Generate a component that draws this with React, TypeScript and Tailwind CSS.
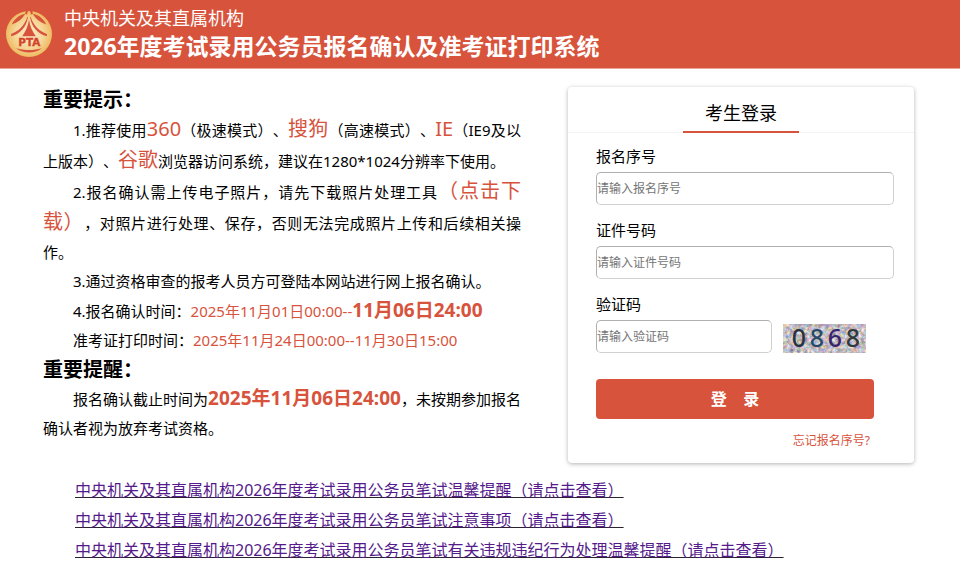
import React from "react";

const notices = [
  "中央机关及其直属机构2026年度考试录用公务员笔试温馨提醒（请点击查看）",
  "中央机关及其直属机构2026年度考试录用公务员笔试注意事项（请点击查看）",
  "中央机关及其直属机构2026年度考试录用公务员笔试有关违规违纪行为处理温馨提醒（请点击查看）",
];

const inputClass =
  "h-[33px] rounded-[5px] border border-[#d0d0d0] border-t-[#b0b0b0] border-l-[#b0b0b0] bg-white text-xs text-black placeholder:text-[#757575]";

function Logo() {
  return (
    <svg viewBox="0 0 136 136" className="mt-1 size-[46px] shrink-0" aria-hidden="true">
      <defs>
        <radialGradient id="gold" cx="50%" cy="50%" r="50%">
          <stop offset="0" stopColor="#fbeccb" />
          <stop offset="0.6" stopColor="#f6d79b" />
          <stop offset="1" stopColor="#eebb61" />
        </radialGradient>
      </defs>
      <circle cx="68" cy="68" r="68" fill="url(#gold)" />
      <g fill="#d7533c">
        <path d="M56 8 C38 12 24 24 17 40 C34 34 48 24 57 8 Z" />
        <path d="M80 8 C98 12 112 24 119 40 C102 34 88 24 79 8 Z" />
        <path d="M58 0 L65 0 L62 10 L57 9 Z" />
        <path d="M78 0 L71 0 L74 10 L79 9 Z" />
        <path d="M63 18 C54 44 38 60 15 68 L15 75 C42 68 60 48 65 18 Z" />
        <path d="M73 18 C82 44 98 60 121 68 L121 75 C94 68 76 48 71 18 Z" />
        <path d="M68 26 C65 46 58 60 48 75 L88 75 C78 60 71 46 68 26 Z" />
        <path d="M30 110 C54 117 82 117 106 110 C84 127 52 127 30 110 Z" />
      </g>
      <text
        x="69"
        y="102"
        textAnchor="middle"
        fill="#d3432c"
        stroke="#d3432c"
        strokeWidth="1"
        className="font-['DejaVu_Sans',sans-serif] text-[31px] font-bold"
      >
        PTA
      </text>
    </svg>
  );
}

function Captcha() {
  return (
    <svg viewBox="0 0 83 29" className="h-[29px] w-[83px] overflow-visible" role="img" aria-label="0868">
      <defs>
        <filter id="noise" x="0" y="0" width="100%" height="100%" colorInterpolationFilters="sRGB">
          <feTurbulence type="fractalNoise" baseFrequency="0.28" numOctaves="3" seed="8" />
          <feColorMatrix values="0.7 0.2 0 0 0.32  0.2 0.6 0 0 0.34  0 0.3 0.6 0 0.31  0 0 0 0 1" />
        </filter>
      </defs>
      <rect width="83" height="29" filter="url(#noise)" />
      <g className="font-['Noto_Sans',sans-serif] text-[25px] font-medium" textAnchor="middle">
        <text x="16" y="23" fill="#26333c">0</text>
        <text x="34" y="23" fill="#274a6c">8</text>
        <text x="52" y="23" fill="#35256c">6</text>
        <text x="70" y="23" fill="#303a3c">8</text>
      </g>
    </svg>
  );
}

function Red({ children }: { children: React.ReactNode }) {
  return <span className="text-xl leading-[29px] text-[#d7533c]">{children}</span>;
}

function Deadline({ children }: { children: React.ReactNode }) {
  return <strong className="text-[19px] leading-[29px] font-bold text-[#d7533c]">{children}</strong>;
}

function Tips() {
  return (
    <section className="-mt-0.5 text-justify text-[15px] leading-[29px]">
      <h2 className="text-xl leading-[29px] font-bold">重要提示：</h2>
      <p className="indent-[30px]">
        1.推荐使用<Red>360</Red>（极速模式）、<Red>搜狗</Red>（高速模式）、<Red>IE</Red>
        （IE9及以上版本）、<Red>谷歌</Red>浏览器访问系统，建议在1280*1024分辨率下使用。
      </p>
      <p className="indent-[30px]">
        2.报名确认需上传电子照片，请先下载照片处理工具
        <a href="#download">
          <Red>（点击下载）</Red>
        </a>
        ，对照片进行处理、保存，否则无法完成照片上传和后续相关操作。
      </p>
      <p className="indent-[30px]">3.通过资格审查的报考人员方可登陆本网站进行网上报名确认。</p>
      <p className="indent-[30px]">
        4.报名确认时间：<span className="text-[#d7533c]">2025年11月01日00:00--</span>
        <Deadline>11月06日24:00</Deadline>
      </p>
      <p className="indent-[30px]">
        准考证打印时间：
        <span className="text-[#d7533c]">2025年11月24日00:00--11月30日15:00</span>
      </p>
      <h2 className="text-xl leading-[29px] font-bold">重要提醒：</h2>
      <p className="indent-[30px]">
        报名确认截止时间为<Deadline>2025年11月06日24:00</Deadline>，未按期参加报名确认者视为放弃考试资格。
      </p>
    </section>
  );
}

function LoginCard() {
  return (
    <form
      className="self-start rounded-[4px] bg-white pb-3 shadow-[0_1px_4px_rgba(0,0,0,0.3)]"
      onSubmit={(e) => e.preventDefault()}
    >
      <div className="flex justify-center border-b border-[#f3f3f3]">
        <h2 className="-mb-px w-1/3 border-b-2 border-[#d7533c] pt-3 pb-1 text-center text-lg leading-7">
          考生登录
        </h2>
      </div>
      <div className="flex flex-col pt-[11px] pr-5 pl-7">
        <label htmlFor="serial" className="text-[15px] leading-6">
          报名序号
        </label>
        <input id="serial" type="text" placeholder="请输入报名序号" className={`mt-1 ${inputClass}`} />
        <label htmlFor="idcard" className="mt-[13px] text-[15px] leading-6">
          证件号码
        </label>
        <input id="idcard" type="text" placeholder="请输入证件号码" className={`mt-1 ${inputClass}`} />
        <label htmlFor="code" className="mt-[13px] text-[15px] leading-6">
          验证码
        </label>
        <div className="mt-1 flex items-end gap-[11px]">
          <input id="code" type="text" placeholder="请输入验证码" className={`w-[176px] ${inputClass}`} />
          <button type="button">
            <Captcha />
          </button>
        </div>
        <button
          type="submit"
          className="mt-[26px] mr-5 h-10 rounded-[4px] bg-[#d7533c] text-base font-bold whitespace-pre text-white"
        >
          {"登    录"}
        </button>
        <a href="#forgot" className="mt-3 mr-6 self-end text-xs leading-5 text-[#d7533c]">
          忘记报名序号?
        </a>
      </div>
    </form>
  );
}

export default function App() {
  return (
    <div className="min-h-screen bg-white font-['Noto_Sans','Noto_Sans_CJK_SC',sans-serif] text-black [text-spacing-trim:space-all]">
      <header className="flex items-center gap-3 border-b border-[#e9a598] bg-[#d7533c] px-[6px] pt-1 pb-2 text-white">
        <Logo />
        <div>
          <p className="text-lg leading-7">中央机关及其直属机构</p>
          <h1 className="text-[23px] leading-7 font-bold">2026年度考试录用公务员报名确认及准考证打印系统</h1>
        </div>
      </header>
      <main className="pt-[18px] pr-[46px] pl-[43px]">
        <div className="grid grid-cols-[478fr_346fr] gap-x-[47px]">
          <Tips />
          <LoginCard />
        </div>
        <ul className="mt-3 pl-8 text-base leading-[30px]">
          {notices.map((notice) => (
            <li key={notice}>
              <a href="#notice" className="text-[#551a8b] underline decoration-[#2b2230]">
                {notice}
              </a>
            </li>
          ))}
        </ul>
      </main>
    </div>
  );
}
